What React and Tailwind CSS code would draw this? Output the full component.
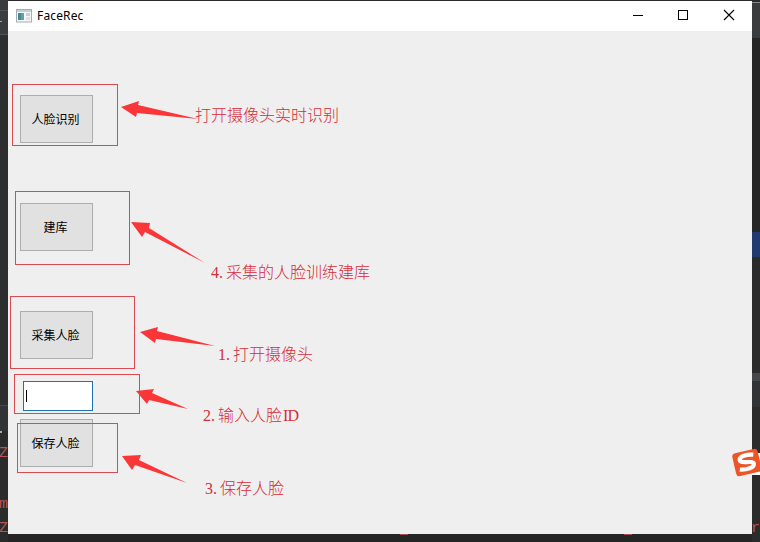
const outlines = [
  'left-[12px] top-[84px] w-[106px] h-[62px]',
  'left-[15px] top-[191px] w-[115px] h-[74px]',
  'left-[10px] top-[296px] w-[125px] h-[73px]',
  'left-[14px] top-[374px] w-[126px] h-[40px]',
  'left-[17px] top-[423px] w-[101px] h-[50px]',
];

const arrows = [
  '121,107 139,101 138,105 198,119 137,113 136,117',
  '131,222 150,223 149,228 205,263 145,232 142,237',
  '140,332 158,327 157,331 215,346 156,339 155,343',
  '136,391 154,389 152,393 188,409 149,400 147,404',
  '122,456 141,455 139,460 187,483 135,465 132,470',
];

const notes = [
  { at: 'left-[195px] top-[104px]', step: '', text: '打开摄像头实时识别' },
  { at: 'left-[210px] top-[261px]', step: '4.', text: '采集的人脸训练建库' },
  { at: 'left-[217px] top-[343px]', step: '1.', text: '打开摄像头' },
  { at: 'left-[202px] top-[404px]', step: '2.', text: '输入人脸', suffix: 'ID' },
  { at: 'left-[204px] top-[477px]', step: '3.', text: '保存人脸' },
];

function PushButton({ children, className = '' }) {
  return (
    <button
      className={`block h-12 w-[73px] border border-[#adadad] bg-[#e1e1e1] pr-0.5 text-center text-[12px] leading-none text-black ${className}`}
    >
      {children}
    </button>
  );
}

function AppIcon() {
  return (
    <svg width="16" height="14" viewBox="0 0 16 14">
      <rect x=".5" y=".5" width="15" height="12.5" fill="#f4f6f7" stroke="#a3adb3" />
      <rect x="1" y="1" width="14" height="2" fill="#c2d1d8" />
      <rect x="2" y="4" width="6" height="7" fill="#438b8d" />
      <rect x="5" y="4" width="3" height="7" fill="#639eac" />
      <rect x="10" y="4" width="4" height="3" fill="#c7d0d5" />
      <rect x="10" y="8" width="4" height="3" fill="#dfe0e2" />
    </svg>
  );
}

function TitleBar() {
  return (
    <header className="flex h-[30px] shrink-0 items-center bg-white pl-2">
      <AppIcon />
      <h1 className="ml-[5px] flex-1 font-['Noto_Sans','Open_Sans',sans-serif] text-[12px] leading-none tracking-[0.15px] text-black">
        FaceRec
      </h1>
      <svg width="137" height="30" viewBox="0 0 137 30" fill="none" stroke="#000">
        <path d="M18 14.5h10" />
        <rect x="63.500" y="9.500" width="9" height="9" />
        <path d="M109 9l10 10M119 9l-10 10" strokeWidth="1.1" />
      </svg>
    </header>
  );
}

function LeftEditorStrip() {
  return (
    <div className="flex w-2 shrink-0 flex-col overflow-hidden bg-[#2b2b2b] font-['Liberation_Mono',monospace] text-[15px] leading-4 text-[#b95353]">
      <div className="h-[11px] border-b border-[#505254] bg-[#3a3c3e]" />
      <div className="h-6 border-b border-[#505254] bg-[#3a3c3e] pt-2.5">
        <div className="h-px w-0.5 bg-[#aaa]" />
      </div>
      <div className="h-[370px] bg-[#2d2e30]" />
      <div className="h-[26px] border-t border-[#45474a] bg-[#313335]" />
      <div className="h-[15px]">
        <div className="h-0.5 w-0.5 bg-[#aaa]" />
      </div>
      <div className="-ml-px h-[51px]">Z</div>
      <div className="-ml-px h-6">m</div>
      <div className="-ml-px">Z</div>
    </div>
  );
}

function RightEditorStrip() {
  return (
    <div className="flex w-2 shrink-0 flex-col overflow-hidden bg-[#2b2b2b] font-['Liberation_Mono',monospace] text-[15px] leading-4 text-[#b95353]">
      <div className="h-[3px] border-b border-[#888] bg-[#2b2b2b]" />
      <div className="h-[35px] bg-[#3a3c3e]" />
      <div className="h-[194px] bg-[#262627]" />
      <div className="h-[25px] bg-[#213b70]" />
      <div className="h-[116px]" />
      <div className="h-2 bg-[#45474a]" />
      <div className="h-[26px] bg-[#313335]" />
      <div className="h-[46px]" />
      <div className="h-[22px] bg-white" />
      <div className="h-[46px]" />
      <div className="-ml-px">r</div>
    </div>
  );
}

function Annotations() {
  return (
    <div className="pointer-events-none absolute inset-0">
      {outlines.map((place) => (
        <div key={place} className={`absolute border border-[#d94a52] ${place}`} />
      ))}
      <svg className="absolute inset-0" width="760" height="542" viewBox="0 0 760 542">
        {arrows.map((points) => (
          <polygon key={points} points={points} fill="#fa3638" />
        ))}
      </svg>
      {notes.map(({ at, step, text, suffix }) => (
        <p
          key={at}
          className={`absolute flex whitespace-nowrap font-['Liberation_Serif','Noto_Sans_CJK_SC',serif] text-[16px] leading-6 font-light text-[#d62c38] ${at}`}
        >
          {step && <span className="w-4 pl-px">{step}</span>}
          <span>{text}</span>
          {suffix && <span className="pl-px tracking-[-0.8px]">{suffix}</span>}
        </p>
      ))}
    </div>
  );
}

function SogouBadge() {
  return (
    <svg className="absolute top-[448px] left-[731px]" width="29" height="30" viewBox="0 0 29 30">
      <g transform="rotate(-13 15 15)">
        <rect x="3" y="3" width="26" height="23.500" rx="3.500" fill="#ee5425" />
        <path
          d="M24 8.500C18 6.500 9.500 7 9.500 11c0 4 13 2.500 13 6.500 0 4-9 4.500-15 2.500"
          fill="none"
          stroke="#fff"
          strokeWidth="4.200"
        />
      </g>
    </svg>
  );
}

export default function App() {
  return (
    <div className="relative flex h-[542px] w-[760px] overflow-hidden bg-[#2b2b2b] font-['Noto_Sans_CJK_SC',sans-serif]">
      <LeftEditorStrip />
      <div className="flex min-w-0 flex-1 flex-col pt-px">
        <TitleBar />
        <main className="h-[503px] bg-[#efefef] pt-16 pl-3">
          <PushButton>人脸识别</PushButton>
          <PushButton className="mt-[60px]">建库</PushButton>
          <PushButton className="mt-[60px]">采集人脸</PushButton>
          <div className="mt-[22px] ml-[3px] flex h-[30px] w-[70px] items-center border border-[#1d72b5] bg-white pl-0.5">
            <span className="h-3 w-px bg-black" />
          </div>
          <PushButton className="mt-2">保存人脸</PushButton>
        </main>
        <div className="flex h-2 items-start bg-[#252526]">
          <div className="ml-[392px] h-px w-2 bg-[#a35050]" />
          <div className="ml-[216px] h-px w-2 bg-[#a35050]" />
        </div>
      </div>
      <RightEditorStrip />
      <Annotations />
      <SogouBadge />
    </div>
  );
}
